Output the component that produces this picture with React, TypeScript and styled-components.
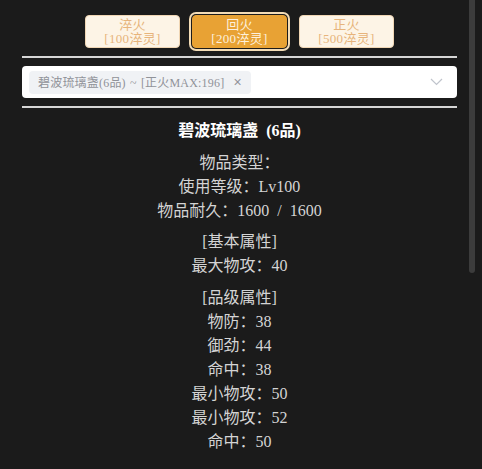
import React, { useState } from 'react'
import styled, { createGlobalStyle } from 'styled-components'

const GlobalStyle = createGlobalStyle`
  html, body {
    margin: 0;
    padding: 0;
    background: #1b1b1b;
  }
  * {
    box-sizing: border-box;
  }
`

const FONT = `"Liberation Serif", "Noto Sans CJK SC", serif`

const Page = styled.div`
  position: relative;
  width: 482px;
  height: 469px;
  overflow: hidden;
  background: #1b1b1b;
  padding: 15px 25px 0 22px;
  font-family: ${FONT};
`

const Scrollbar = styled.div`
  position: absolute;
  top: 0;
  right: 7px;
  width: 6px;
  height: 273px;
  background: #3c3c3c;
  border-radius: 0 0 3px 3px;
`

const FireRow = styled.div`
  display: flex;
  justify-content: center;
  gap: 12px;
`

const FireButton = styled.button<{ active?: boolean }>`
  width: 95px;
  height: 33px;
  padding: 0;
  border-radius: 4px;
  font-family: ${FONT};
  font-size: 13px;
  line-height: 14px;
  letter-spacing: 0.3px;
  cursor: pointer;
  display: flex;
  flex-direction: column;
  align-items: center;
  justify-content: center;
  border: 1px solid ${({ active }) => (active ? '#e8a234' : '#f0d6b4')};
  background: ${({ active }) => (active ? '#e8a234' : '#fdf4e6')};
  color: ${({ active }) => (active ? '#fdf0dc' : '#e7b47c')};
  box-shadow: ${({ active }) => (active ? '0 0 0 1px #1b1b1b, 0 0 0 3px #f3dcb6' : 'none')};
`

const Divider = styled.div`
  height: 2px;
  background: #d6d6d6;
  margin-top: 8px;
`

const SelectBox = styled.div`
  margin-top: 8px;
  height: 32px;
  background: #fff;
  border-radius: 4px;
  display: flex;
  align-items: center;
  padding: 0 14px 0 7px;
`

const Tag = styled.span`
  display: inline-flex;
  align-items: center;
  height: 23px;
  padding: 0 9px 0 9px;
  background: #f0f2f5;
  border-radius: 4px;
  color: #909399;
  font-size: 12px;
  letter-spacing: 0.2px;
  word-spacing: 1px;
  white-space: pre;
`

const TagClose = styled.span`
  margin-left: 9px;
  font-family: "Liberation Sans", sans-serif;
  font-size: 14px;
  color: #909399;
`

const Chevron = styled.svg`
  margin-left: auto;
`

const Details = styled.div`
  margin-top: 11px;
  display: flex;
  flex-direction: column;
  align-items: center;
  color: #d4d4d4;
  font-size: 16px;
  line-height: 24px;
  word-spacing: 4px;
`

const Title = styled.div`
  color: #ffffff;
  font-weight: bold;
`

const Section = styled.div<{ gap: number }>`
  margin-top: ${({ gap }) => gap}px;
  display: flex;
  flex-direction: column;
  align-items: center;
`

const Line = styled.div`
  white-space: pre;
`

const fires = [
  { name: '淬火', cost: '[100淬灵]' },
  { name: '回火', cost: '[200淬灵]' },
  { name: '正火', cost: '[500淬灵]' }
]

const sections = [
  { gap: 8, lines: ['物品类型：', '使用等级：Lv100', '物品耐久：1600 / 1600'] },
  { gap: 7, lines: ['[基本属性]', '最大物攻：40'] },
  { gap: 8, lines: ['[品级属性]', '物防：38', '御劲：44', '命中：38', '最小物攻：50', '最小物攻：52', '命中：50'] }
]

export default function App() {
  const [selected, setSelected] = useState(1)

  return (
    <Page>
      <GlobalStyle />
      <FireRow>
        {fires.map((f, i) => (
          <FireButton key={f.name} active={i === selected} onClick={() => setSelected(i)}>
            <span>{f.name}</span>
            <span>{f.cost}</span>
          </FireButton>
        ))}
      </FireRow>
      <Divider />
      <SelectBox>
        <Tag>
          碧波琉璃盏(6品) ~ [正火MAX:196]
          <TagClose>×</TagClose>
        </Tag>
        <Chevron width="13" height="8" viewBox="0 0 13 8" fill="none">
          <path d="M1 1l5.5 5.5L12 1" stroke="#c0c4cc" strokeWidth="1.2" />
        </Chevron>
      </SelectBox>
      <Divider />
      <Details>
        <Title>碧波琉璃盏 (6品)</Title>
        {sections.map((s, i) => (
          <Section key={i} gap={s.gap}>
            {s.lines.map((l, j) => (
              <Line key={j}>{l}</Line>
            ))}
          </Section>
        ))}
      </Details>
      <Scrollbar />
    </Page>
  )
}
